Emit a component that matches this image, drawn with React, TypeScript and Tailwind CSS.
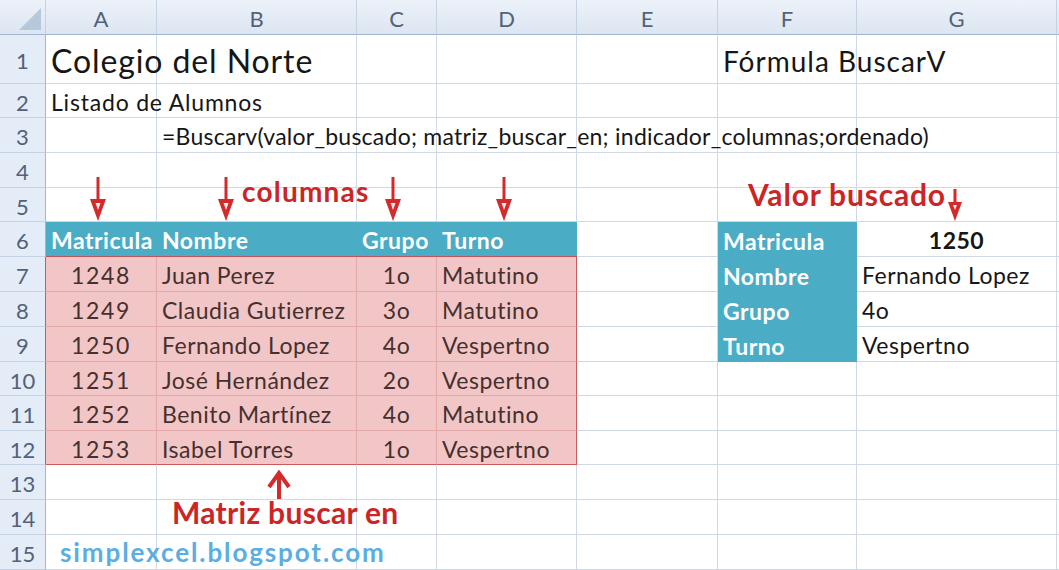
import React from "react";

type Kind = "plain" | "teal" | "head" | "pink";

interface CellDef {
  t?: React.ReactNode;
  kind?: Kind;
  center?: boolean;
  bold?: boolean;
  size?: string;
  layout?: string;
  edgeR?: boolean;
  edgeB?: boolean;
}

const COLS = ["A", "B", "C", "D", "E", "F", "G"];
const RED = "#d42a2a";

const alumnos = [
  ["1248", "Juan Perez", "1o", "Matutino"],
  ["1249", "Claudia Gutierrez", "3o", "Matutino"],
  ["1250", "Fernando Lopez", "4o", "Vespertno"],
  ["1251", "José Hernández", "2o", "Vespertno"],
  ["1252", "Benito Martínez", "4o", "Matutino"],
  ["1253", "Isabel Torres", "1o", "Vespertno"],
];

const lookup: [string, string][] = [
  ["Nombre", "Fernando Lopez"],
  ["Grupo", "4o"],
  ["Turno", "Vespertno"],
];

const DownArrow = () => (
  <svg className="shrink-0" width="18" height="44" viewBox="0 0 18 44">
    <rect x="7.5" y="0" width="3" height="24" fill={RED} />
    <polygon points="1,22 17,22 9,44" fill={RED} />
    <polygon points="6.5,26 11.5,26 9,33" fill="#fbeaea" />
  </svg>
);

const SmallDownArrow = () => (
  <svg className="shrink-0" width="16" height="32" viewBox="0 0 16 32">
    <rect x="6.5" y="0" width="3" height="15" fill={RED} />
    <polygon points="1,13 15,13 8,32" fill={RED} />
    <polygon points="6,16 10,16 8,21" fill="#fbeaea" />
  </svg>
);

const UpArrow = () => (
  <svg className="shrink-0" width="26" height="29" viewBox="0 0 26 29">
    <path d="M13 3 L13 29 M3 17 L13 3 L23 17" stroke={RED} strokeWidth="4" fill="none" />
  </svg>
);

const empty = (): CellDef[] => COLS.map(() => ({}));

// the 15 sheet rows, column A..G
const buildRows = (): CellDef[][] => {
  const rows: CellDef[][] = [];
  const r1 = empty();
  r1[0] = { t: "Colegio del Norte", size: "text-[32px] tracking-[0.9px]" };
  r1[5] = { t: "Fórmula BuscarV", size: "text-[28px] tracking-[1px]" };
  rows.push(r1);

  const r2 = empty();
  r2[0] = { t: "Listado de Alumnos", size: "text-[23px] tracking-[0.8px]" };
  rows.push(r2);

  const r3 = empty();
  r3[1] = {
    t: "=Buscarv(valor_buscado; matriz_buscar_en; indicador_columnas;ordenado)",
    size: "text-[23px] tracking-[0.25px]",
  };
  rows.push(r3);

  rows.push(empty());

  const r5 = empty();
  r5[0] = { t: <DownArrow />, layout: "items-end justify-center pr-[7px]" };
  r5[1] = {
    t: (
      <>
        <DownArrow />
        <span className="mb-[16px] ml-[7px] text-[28px] font-bold tracking-[1.2px] text-[#cc2525]">columnas</span>
      </>
    ),
    layout: "items-end pl-[60px]",
  };
  r5[2] = { t: <DownArrow />, layout: "items-end justify-center pr-[8px]" };
  r5[3] = { t: <DownArrow />, layout: "items-end justify-center pr-[6px]" };
  r5[5] = {
    t: (
      <>
        <span className="mb-[12px] text-[30px] font-bold tracking-[0.8px] text-[#cc2525]">Valor buscado</span>
        <span className="ml-[1px]">
          <SmallDownArrow />
        </span>
      </>
    ),
    layout: "items-end pl-[30px]",
  };
  rows.push(r5);

  const r6 = empty();
  r6[0] = { t: "Matricula", kind: "head", bold: true };
  r6[1] = { t: "Nombre", kind: "head", bold: true };
  r6[2] = { t: "Grupo", kind: "head", bold: true };
  r6[3] = { t: "Turno", kind: "head", bold: true };
  r6[5] = { t: "Matricula", kind: "teal", bold: true };
  r6[6] = { t: "1250", bold: true, center: true };
  rows.push(r6);

  alumnos.forEach((a, i) => {
    const r = empty();
    const last = i === alumnos.length - 1;
    r[0] = { t: a[0], kind: "pink", center: true, edgeB: last, size: "text-[23px] tracking-[1.6px]" };
    r[1] = { t: a[1], kind: "pink", edgeB: last };
    r[2] = { t: a[2], kind: "pink", center: true, edgeB: last };
    r[3] = { t: a[3], kind: "pink", edgeR: true, edgeB: last };
    if (i < lookup.length) {
      r[5] = { t: lookup[i][0], kind: "teal", bold: true };
      r[6] = { t: lookup[i][1] };
    }
    rows.push(r);
  });

  const r13 = empty();
  r13[1] = { t: <UpArrow />, layout: "items-end pl-[109px]" };
  rows.push(r13);

  const r14 = empty();
  r14[1] = {
    t: <span className="-mt-[3px] text-[30px] font-bold tracking-[0.3px] text-[#cc2525]">Matriz buscar en</span>,
    layout: "items-start pl-[15px]",
  };
  rows.push(r14);

  const r15 = empty();
  r15[0] = {
    t: <span className="text-[26px] font-bold tracking-[1.9px] text-[#5aaee2]">simplexcel.blogspot.com</span>,
    layout: "items-start pl-[14px] pt-[4px]",
  };
  rows.push(r15);
  return rows;
};

const Cell = ({ c }: { c: CellDef }) => {
  const kind = c.kind ?? "plain";
  let cls = "";
  if (kind === "plain") cls = "border-r border-b border-[#d0d7e5] text-[#161616]";
  if (kind === "teal") cls = "bg-[#4bacc6] text-white";
  if (kind === "head") cls = "bg-[#4bacc6] text-white border-b border-[#b8585a]";
  if (kind === "pink") cls = "bg-[#f2c6c6] text-[#45302f] border-r border-b border-[#e3a9a9]";
  return (
    <div
      className={`flex whitespace-nowrap leading-none ${c.layout ?? "items-center px-[5px] pt-[3px]"} ${cls} ${
        c.center ? "justify-center" : ""
      } ${c.bold ? "font-bold" : ""} ${c.size ?? "text-[23px] tracking-[0.5px]"} ${
        c.edgeR ? "border-r-[#cc5a5a]" : ""
      } ${c.edgeB ? "border-b-[#cc5a5a]" : ""}`}
    >
      <div className="relative z-10 flex items-end">{c.t}</div>
    </div>
  );
};

export default function App() {
  const rows = buildRows();
  return (
    <div className="h-[570px] w-[1059px] overflow-hidden bg-white font-['Lato',sans-serif]">
      <div className="grid grid-cols-[46px_111px_200px_80px_140px_141px_139px_200px_2px] grid-rows-[35px_49px_34px_35px_35px_34px_35px_35px_35px_35px_34px_35px_34px_35px_35px_35px]">
        {/* select-all corner */}
        <div className="flex items-end justify-end border-r border-b border-r-[#c5d2e3] border-b-[#9eb6ce] bg-linear-to-b from-[#edf2f9] to-[#dce5f1] pr-[4px] pb-[4px]">
          <svg width="22" height="22" viewBox="0 0 22 22">
            <polygon points="22,0 22,22 0,22" fill="#b7c7dc" />
          </svg>
        </div>
        {COLS.map((l) => (
          <div
            key={l}
            className="flex items-center justify-center border-r border-b border-r-[#c5d2e3] border-b-[#9eb6ce] bg-linear-to-b from-[#edf2f9] to-[#dce5f1] pt-[2px] text-[22px] text-[#52627a]"
          >
            {l}
          </div>
        ))}
        <div className="border-b border-b-[#9eb6ce] bg-linear-to-b from-[#edf2f9] to-[#dce5f1]" />

        {rows.map((r, i) => (
          <React.Fragment key={i}>
            <div
              className={`flex items-center justify-center border-r border-b border-b-[#c5d2e3] bg-[#e4ecf7] pt-[3px] text-[22px] text-[#52627a] ${
                i >= 6 && i <= 11 ? "border-r-[#cc5a5a]" : "border-r-[#9eb6ce]"
              }`}
            >
              {i + 1}
            </div>
            {r.map((c, j) => (
              <Cell key={j} c={c} />
            ))}
            <div className="border-b border-[#d0d7e5]" />
          </React.Fragment>
        ))}
      </div>
    </div>
  );
}
